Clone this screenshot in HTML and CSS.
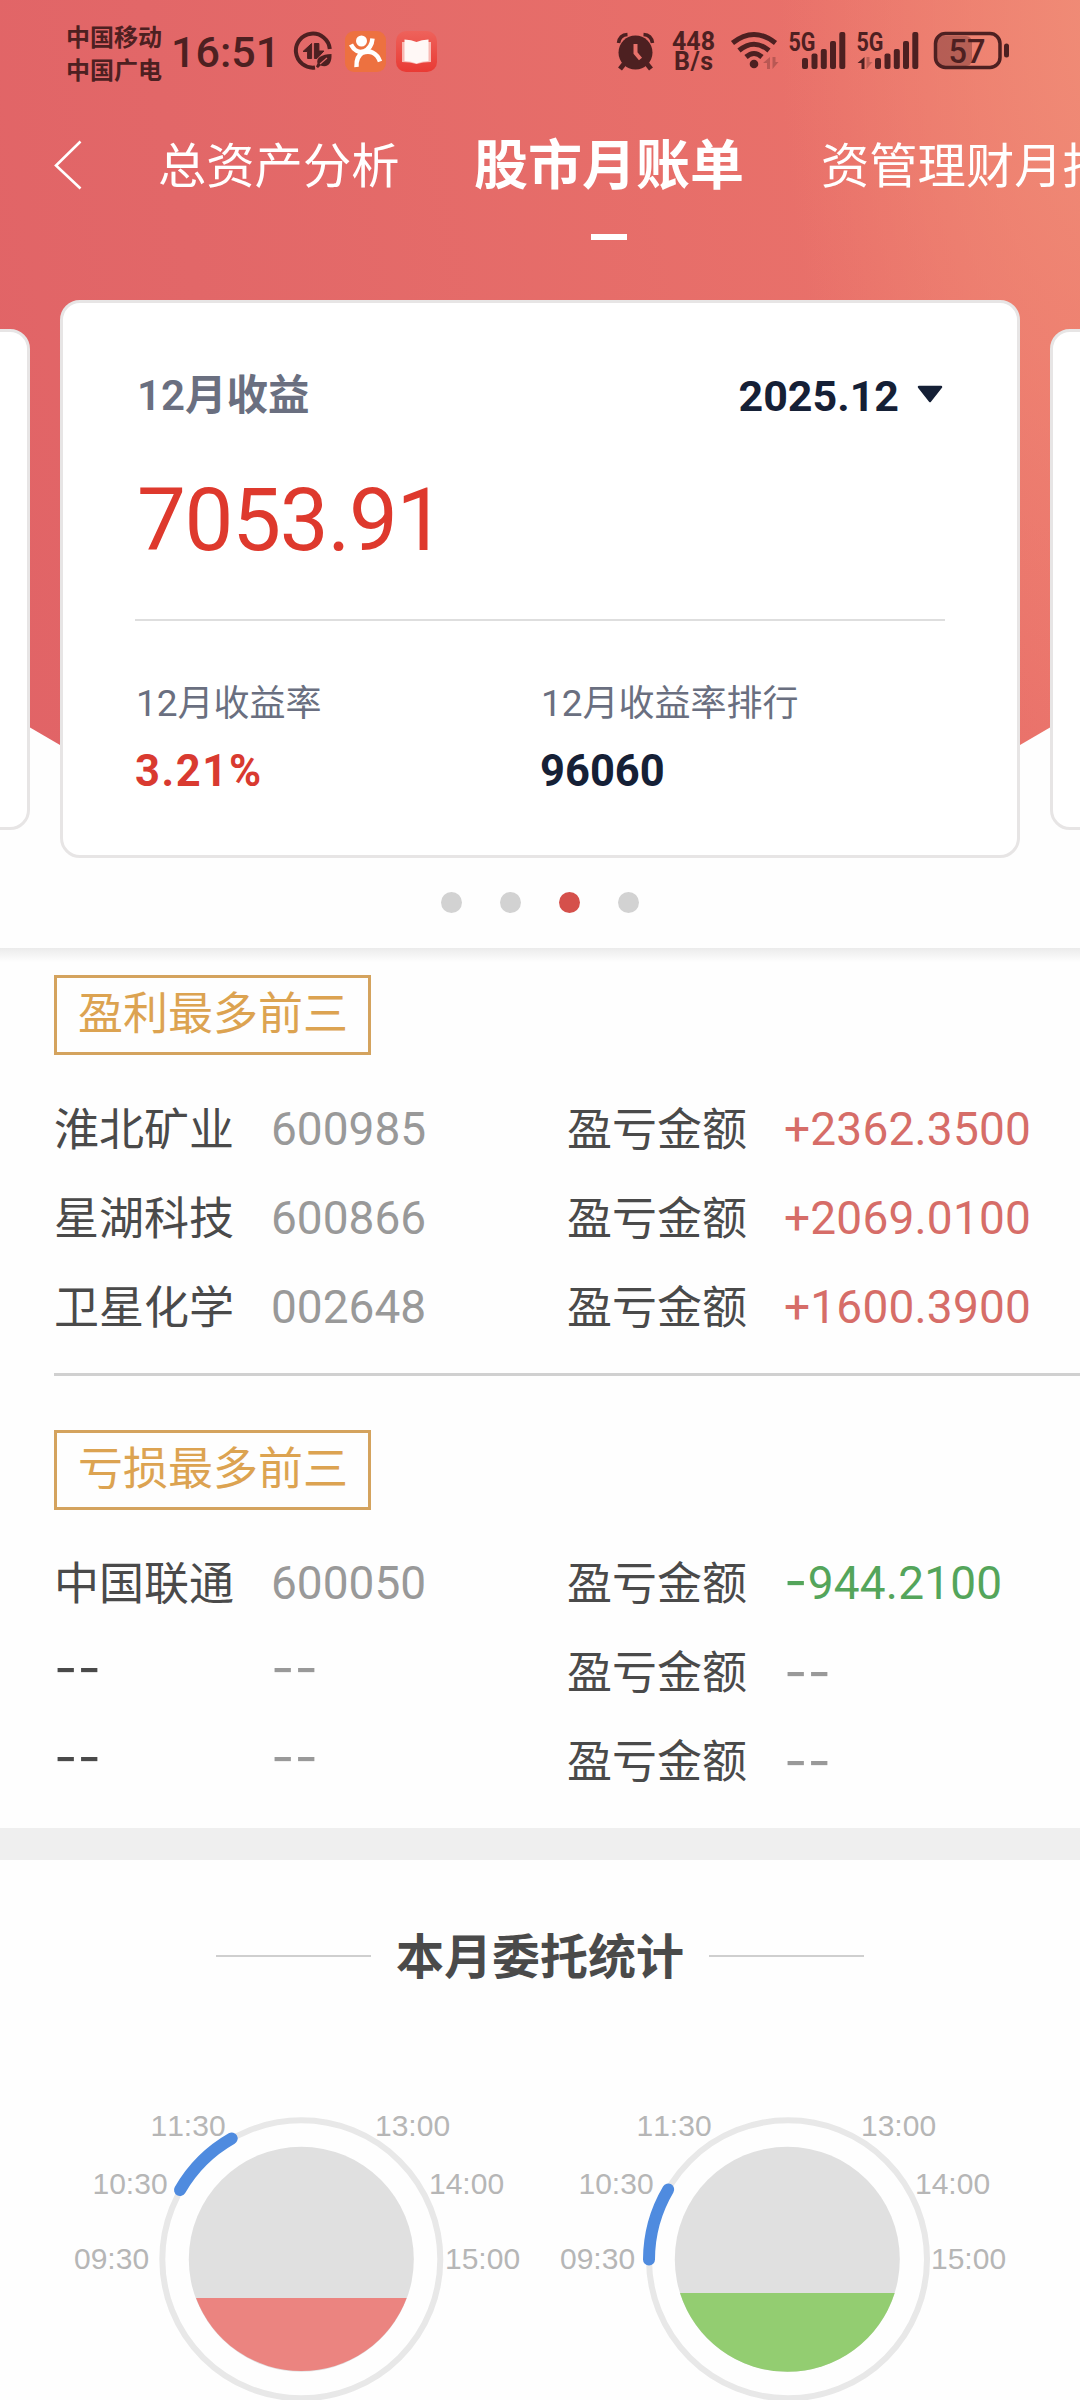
FILE: index.html
```html
<!DOCTYPE html>
<html lang="zh-CN">
<head>
<meta charset="utf-8">
<title>股市月账单</title>
<link rel="stylesheet" href="styles.css">
</head>
<body>
<main class="page">
  <section class="hero">
    <div class="status">
      <div class="carriers"><span>中国移动</span><span>中国广电</span></div>
      <div class="clock">16:51</div>
      <svg class="ic-saver" width="40" height="40" viewBox="0 0 40 40">
        <path d="M36.800 18A17 17 0 1 0 22 36.500" fill="none" stroke="#4d2021" stroke-width="4"/>
        <path d="M18.600 12.500v15h-4v-7H10zM21.400 12.500v15h2.500l7-7.500h-5v-7.500z" fill="#4d2021" stroke="#4d2021" stroke-linejoin="round"/>
        <path d="M38.500 23c-10 .500-15.500 3.500-14 9.500L23 35.500l2 1.500 2.500-2.500C35.500 37 39 32 38.500 23z" fill="#4d2021"/>
        <path d="M27 33l7-6" stroke="#e46a69" stroke-width="1.200"/>
      </svg>
      <svg class="ic-app" width="41" height="41" viewBox="0 0 41 41">
        <rect width="41" height="41" rx="9" fill="#ed7140"/>
        <circle cx="16.500" cy="10" r="5.500" fill="#fff"/>
        <path d="M6 13.500C9 19.500 14 22 18.500 20.500C24 18.500 27 14 27.500 7.500M19 20.500C13 24 11 29 11.500 36M17 22C25 18.500 32 22 35 30.500" fill="none" stroke="#fff" stroke-width="4.500"/>
      </svg>
      <svg class="ic-app" width="41" height="41" viewBox="0 0 41 41">
        <defs><linearGradient id="book" x2="0" y2="1"><stop offset="0" stop-color="#ee625b"/><stop offset="1" stop-color="#e93a34"/></linearGradient></defs>
        <rect width="41" height="41" rx="10" fill="url(#book)"/>
        <path d="M6 11h29v20q-8 0-14.500 2Q14 31 6 31z" fill="#f8bab5"/>
        <path d="M8.500 8.500q7 0 12 2.500 5-2.500 12-2.500v21.500q-7 0-12 2.500-5-2.500-12-2.500z" fill="#fff8f6"/>
      </svg>
      <div class="grow"></div>
      <svg class="ic-right" width="410" height="64" viewBox="614 19 410 64" fill="#4d2021">
        <circle cx="635.500" cy="52.500" r="17"/>
        <path d="M618.500 43q1-8 9-8.500M652.500 43q-1-8-9-8.500" fill="none" stroke="#4d2021" stroke-width="3.500"/>
        <path d="M624 64l-4 5M647 64l4 5" stroke="#4d2021" stroke-width="5"/>
        <path d="M635.500 44v9l5 6" fill="none" stroke="#e8716a" stroke-width="4"/>
        <text x="672" y="50" class="net" textLength="43">448</text>
        <text x="674" y="69.500" class="net" textLength="39">B/s</text>
        <g fill="none" stroke="#4d2021" stroke-width="5">
          <path d="M732.500 43Q754 26 775.500 43M739 50.500Q754 38 769 50.500M746 57Q754 50 762 57"/>
        </g>
        <circle cx="754" cy="64" r="4.300"/>
        <path d="M770 57v12h-3v-6h-4zM772.500 57v12l6-7h-3v-5z" opacity=".3"/>
        <text x="788.500" y="50.500" class="gen" textLength="27" lengthAdjust="spacingAndGlyphs">5G</text>
        <g id="bars"><rect x="802" y="58" width="6" height="11" rx="2"/><rect x="811.500" y="53.500" width="6" height="15.500" rx="2"/><rect x="820.800" y="49" width="6" height="20" rx="2"/><rect x="830" y="41" width="6" height="28" rx="2"/><rect x="839.300" y="32" width="6" height="37" rx="2"/></g>
        <text x="856.500" y="50.500" class="gen" textLength="27" lengthAdjust="spacingAndGlyphs">5G</text>
        <use href="#bars" x="73"/>
        <path d="M864.500 57v12h-3v-6h-4z"/>
        <path d="M866.500 57v12l6-7h-3v-5z" opacity=".3"/>
        <rect x="937" y="36" width="35" height="30" rx="6" opacity=".35"/>
        <rect x="935.500" y="33.500" width="64.500" height="34" rx="10" fill="none" stroke="#4d2021" stroke-width="3.500"/>
        <rect x="1004" y="43.500" width="5" height="14" rx="2.500"/>
        <text x="948.500" y="62.500" class="batt" textLength="37" lengthAdjust="spacingAndGlyphs">57</text>
      </svg>
    </div>

    <nav class="tabs">
      <svg class="back" width="32" height="54" viewBox="0 0 32 54"><path d="M28.500 3.500L4 27.500 28.500 50.500" fill="none" stroke="#fff" stroke-width="2.600"/></svg>
      <span class="tab tab-first">总资产分析</span>
      <span class="tab active">股市月账单</span>
      <span class="tab tab-last">资管理财月报</span>
    </nav>

    <div class="carousel">
      <div class="card side"></div>
      <article class="card">
        <div class="row-top">
          <div class="label-strong"><i>12</i>月收益</div>
          <div class="month">2025.12<svg width="28" height="19" viewBox="0 0 28 19"><path d="M3 2h22L14 16z" fill="#152036" stroke="#152036" stroke-width="2.500" stroke-linejoin="round"/></svg></div>
        </div>
        <div class="amount">7053.91</div>
        <div class="metrics">
          <div><div class="label"><i>12</i>月收益率</div><div class="value red">3.21%</div></div>
          <div><div class="label"><i>12</i>月收益率排行</div><div class="value">96060</div></div>
        </div>
      </article>
      <div class="card side"></div>
    </div>
    <div class="dots"><i></i><i></i><i class="on"></i><i></i></div>
  </section>

  <section class="top3">
    <h3 class="tag">盈利最多前三</h3>
    <div class="stock"><span>淮北矿业</span><span class="code">600985</span><span>盈亏金额</span><span class="num up">+2362.3500</span></div>
    <div class="stock"><span>星湖科技</span><span class="code">600866</span><span>盈亏金额</span><span class="num up">+2069.0100</span></div>
    <div class="stock"><span>卫星化学</span><span class="code">002648</span><span>盈亏金额</span><span class="num up">+1600.3900</span></div>
  </section>
  <section class="top3 loss">
    <h3 class="tag">亏损最多前三</h3>
    <div class="stock"><span>中国联通</span><span class="code">600050</span><span>盈亏金额</span><span class="num down"><span class="dash">-</span>944.2100</span></div>
    <div class="stock"><span class="dash raised">--</span><span class="dash raised muted">--</span><span>盈亏金额</span><span class="dash muted">--</span></div>
    <div class="stock"><span class="dash raised">--</span><span class="dash raised muted">--</span><span>盈亏金额</span><span class="dash muted">--</span></div>
  </section>

  <section class="orders">
    <h2><span>本月委托统计</span></h2>
    <div class="charts">
      <svg width="486" height="300" viewBox="58 2100 486 300">
        <circle cx="301.300" cy="2259.300" r="139" fill="none" stroke="#e8e8e8" stroke-width="6"/>
        <circle cx="301.300" cy="2259.300" r="112.500" fill="#e0e0e0"/>
        <path d="M196 2298H406.700A112.500 112.500 0 0 1 196 2298z" fill="#eb8480"/>
        <path d="M180 2190A139 139 0 0 1 231.700 2138.500" class="arc"/>
        <g class="hours"><text x="74" y="2269">09:30</text><text x="92.500" y="2194">10:30</text><text x="150.500" y="2135.500">11:30</text><text x="375" y="2135.500">13:00</text><text x="429" y="2194">14:00</text><text x="445" y="2269">15:00</text></g>
      </svg>
      <svg width="486" height="300" viewBox="58 2100 486 300">
        <circle cx="302" cy="2259.300" r="139" fill="none" stroke="#e8e8e8" stroke-width="6"/>
        <circle cx="301.300" cy="2259.300" r="112.500" fill="#e0e0e0"/>
        <path d="M194 2293H408.700A112.500 112.500 0 0 1 194 2293z" fill="#93cd71"/>
        <path d="M163 2259.500A139 139 0 0 1 182.200 2189.500" class="arc"/>
        <g class="hours"><text x="74" y="2269">09:30</text><text x="92.500" y="2194">10:30</text><text x="150.500" y="2135.500">11:30</text><text x="375" y="2135.500">13:00</text><text x="429" y="2194">14:00</text><text x="445" y="2269">15:00</text></g>
      </svg>
    </div>
  </section>
</main>
</body>
</html>
```
FILE: styles.css
```css
* { box-sizing: border-box; }
body { margin: 0; font-family: Roboto, "Noto Sans CJK SC", sans-serif; color: #4a4a4a; background: #fff; }
i { font-style: normal; }
.page { width: 1080px; height: 2400px; overflow: hidden; background: #fefefe; }

.hero { position: relative; height: 948px; isolation: isolate; }
.hero::before {
  content: ""; position: absolute; inset: 0; z-index: -1;
  clip-path: polygon(0 0, 100% 0, 100% 710px, 1020px 745px, 800px 830px, 280px 830px, 60px 745px, 0 710px);
  background:
    radial-gradient(ellipse 340px 760px at 1120px 0, #f08d77 0, rgba(240, 137, 116, .65) 45%, rgba(236, 122, 110, 0) 100%),
    linear-gradient(80deg, #e16366 0%, #e26768 25%, #e9716a 80%, #ec776d 100%);
}

.status { display: flex; height: 110px; padding: 22px 56px 0 66px; color: #4d2021; }
.carriers { display: flex; flex-direction: column; width: 105px; font: 700 24px/33px "Noto Sans CJK SC", sans-serif; margin-top: -3px; }
.clock { font-size: 43px; font-weight: 500; line-height: 60px; width: 122px; }
.ic-saver { margin-top: 9px; }
.ic-app { margin: 9px 0 0 10px; }
.ic-saver + .ic-app { margin-left: 12px; }
.grow { flex: 1; }
.ic-right { margin-top: -3px; flex: none; }
.net { font: 700 25px Roboto; }
.gen { font: 700 26px Roboto; }
.batt { font: 500 33px Roboto; }

.tabs { display: flex; height: 190px; padding-left: 52px; line-height: 113px; color: #fff; white-space: nowrap; }
.back { margin: 28px 0 0; flex: none; }
.tab { font-size: 48.300px; flex: none; }
.tab-first { margin-left: 74px; }
.active { display: flex; flex-direction: column; align-items: center; margin-left: 74.500px; font-size: 54px; font-weight: 700; }
.active::after { content: ""; width: 36px; height: 6px; margin-top: 11px; background: #fff; }
.tab-last { margin-left: 77px; }

.carousel { display: flex; justify-content: center; align-items: center; gap: 30px; height: 558px; overflow: hidden; }
.card { flex: none; width: 960px; height: 558px; padding: 63px 72px 0; border: 3px solid #e7e5e5; border-radius: 20px; background: #fff; color: #152036; }
.card.side { height: 501px; }
.row-top { display: flex; justify-content: space-between; height: 62px; line-height: 60px; padding: 0 1px 0 2px; }
.label-strong { font-size: 41.500px; font-weight: 700; color: #6a6f80; }
.label-strong i { font-size: 42px; font-weight: 600; }
.month { font-size: 43px; font-weight: 700; letter-spacing: 0; }
.month svg { margin-left: 17px; vertical-align: 7px; }
.amount { height: 193px; padding: 40px 0 0 2px; font-size: 87px; line-height: 104px; color: #de392d; border-bottom: 2px solid #dedede; letter-spacing: -1.300px; }
.metrics { display: grid; grid-template-columns: 1fr 1fr; padding-top: 53px; }
.label { font-size: 36px; line-height: 60px; color: #6a6f80; padding-left: 1px; }
.label i { font-size: 37px; }
.value { font-size: 43.500px; line-height: 60px; margin-top: 8px; font-weight: 700; }
.value.red { color: #d93a30; letter-spacing: 1.600px; }
.dots { display: flex; justify-content: center; gap: 38px; padding-top: 34px; }
.dots i { width: 21px; height: 21px; border-radius: 50%; background: #d2d2d2; }
.dots .on { background: #d5504b; }

.top3 { height: 429px; padding: 27px 0 0 54px; background: linear-gradient(#ebebeb, #fefefe 14px); }
.top3.loss { height: 455px; padding-top: 0; background: none; }
.top3.loss::before { content: ""; display: block; height: 3px; margin-top: -4px; margin-bottom: 54px; background: #d0d0d0; }
.tag { width: 317px; height: 80px; margin: 0 0 30px; padding-left: 21px; border: 3px solid #d4a35e; font-size: 45px; font-weight: 400; line-height: 73px; color: #dca351; white-space: nowrap; }
.loss .tag { margin-bottom: 29px; }
.stock { display: grid; grid-template-columns: 217px 296px 217px 1fr; height: 89px; line-height: 91px; font-size: 45px; }
.code, .num { font-size: 46px; line-height: 89px; color: #999; }
.num { letter-spacing: .200px; }
.num.up { color: #d66d68; }
.num.down { color: #54a55b; }
.dash { font-family: Inter, sans-serif; font-size: 51px; line-height: 88px; }
.num .dash { line-height: 1; }
.muted { color: #999; }
.raised { margin-top: -4px; }

.orders { border-top: 32px solid #efefef; }
.orders h2 { display: flex; align-items: center; justify-content: center; gap: 25px; height: 100px; margin: 46px 0 0; font-size: 48px; line-height: 100px; font-weight: 700; }
.orders h2 span { padding-top: 4px; }
.orders h2::before, .orders h2::after { content: ""; width: 155px; height: 2px; background: #cfcfcf; }
.charts { display: flex; padding: 94px 0 0 58px; }
.charts svg { flex: none; }
.arc { fill: none; stroke: #4f8bdf; stroke-width: 12; stroke-linecap: round; }
.hours { font: 30px "Liberation Sans", sans-serif; fill: #b6b6b6; font-kerning: none; }
```
